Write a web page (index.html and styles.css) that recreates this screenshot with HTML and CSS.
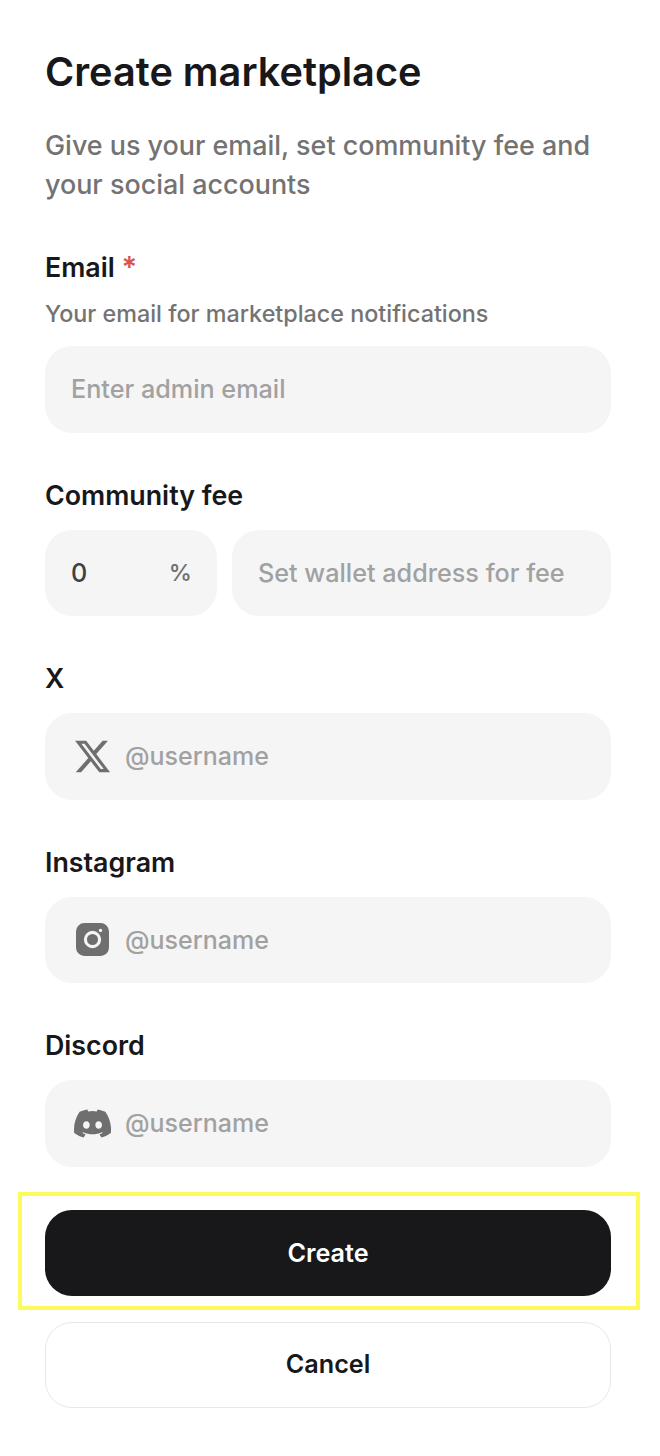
FILE: index.html
```html
<!DOCTYPE html>
<html lang="en">
<head>
    <meta charset="UTF-8">
    <meta name="viewport" content="width=device-width, initial-scale=1.0">
    <title>Create marketplace</title>
    <link rel="stylesheet" href="styles.css">
</head>
<body>
    <form class="page">
        <h1 class="title">Create marketplace</h1>
        <p class="subtitle">Give us your email, set community fee and your social accounts</p>

        <div class="field field-email">
            <label class="label">Email <span class="required">*</span></label>
            <p class="hint">Your email for marketplace notifications</p>
            <div class="box"><span class="placeholder">Enter admin email</span></div>
        </div>

        <div class="field field-fee">
            <label class="label">Community fee</label>
            <div class="fee-row">
                <div class="box box-fee"><span class="value">0</span><span class="unit">%</span></div>
                <div class="box box-wallet"><span class="placeholder">Set wallet address for fee</span></div>
            </div>
        </div>

        <div class="field">
            <label class="label">X</label>
            <div class="box box-social">
                <svg class="icon" viewBox="0.6 0.6 22.8 22.8"><path fill="#6f6f6f" d="M18.244 2.25h3.308l-7.227 8.26 8.502 11.24H16.17l-5.214-6.817L4.99 21.75H1.68l7.73-8.835L1.254 2.25H8.08l4.713 6.231zm-1.161 17.52h1.833L7.084 4.126H5.117z"/></svg>
                <span class="placeholder">@username</span>
            </div>
        </div>

        <div class="field">
            <label class="label">Instagram</label>
            <div class="box box-social">
                <svg class="icon" viewBox="0 0 24 24"><path fill="#6f6f6f" fill-rule="evenodd" d="M6.8 1.3h10.4a5.5 5.5 0 0 1 5.5 5.5v10.4a5.5 5.5 0 0 1-5.5 5.5H6.8a5.5 5.5 0 0 1-5.5-5.5V6.8a5.5 5.5 0 0 1 5.5-5.5zM12 6.4a5.6 5.6 0 1 0 0 11.2 5.6 5.6 0 0 0 0-11.2zm0 2a3.6 3.6 0 1 1 0 7.2 3.6 3.6 0 0 1 0-7.2zm5.2-3.4a1.1 1.1 0 1 0 0 2.2 1.1 1.1 0 0 0 0-2.2z"/></svg>
                <span class="placeholder">@username</span>
            </div>
        </div>

        <div class="field">
            <label class="label">Discord</label>
            <div class="box box-social">
                <svg class="icon" viewBox="0 0 24 24"><path fill="#6f6f6f" d="M20.32 4.37a19.8 19.8 0 0 0-4.89-1.52.07.07 0 0 0-.08.04c-.21.38-.44.87-.61 1.25a18.3 18.3 0 0 0-5.49 0 12.6 12.6 0 0 0-.62-1.25.08.08 0 0 0-.08-.04 19.7 19.7 0 0 0-4.89 1.52.07.07 0 0 0-.03.03C.53 9.05-.32 13.58.1 18.06c0 .02.01.04.03.06a19.9 19.9 0 0 0 6 3.03.08.08 0 0 0 .08-.03c.46-.63.87-1.3 1.23-2a.08.08 0 0 0-.04-.11 13.1 13.1 0 0 1-1.87-.89.08.08 0 0 1-.01-.13l.37-.29a.07.07 0 0 1 .08-.01c3.93 1.79 8.18 1.79 12.07 0a.07.07 0 0 1 .08.01l.37.29a.08.08 0 0 1 0 .13c-.6.35-1.22.64-1.87.89a.08.08 0 0 0-.04.11c.36.7.78 1.37 1.23 2a.08.08 0 0 0 .08.03 19.8 19.8 0 0 0 6-3.03.08.08 0 0 0 .03-.06c.5-5.18-.84-9.67-3.55-13.66a.06.06 0 0 0-.03-.03zM8.02 15.33c-1.18 0-2.16-1.08-2.16-2.42 0-1.33.96-2.42 2.16-2.42 1.21 0 2.18 1.1 2.16 2.42 0 1.34-.96 2.42-2.16 2.42zm7.97 0c-1.18 0-2.15-1.08-2.15-2.42 0-1.33.95-2.42 2.15-2.42 1.22 0 2.18 1.1 2.16 2.42 0 1.34-.94 2.42-2.16 2.42z"/></svg>
                <span class="placeholder">@username</span>
            </div>
        </div>

        <div class="highlight">
            <button type="button" class="btn btn-primary">Create</button>
        </div>
        <button type="button" class="btn btn-secondary">Cancel</button>
    </form>
</body>
</html>
```

FILE: styles.css
```css
* {
    box-sizing: border-box;
}
body {
    margin: 0;
    background-color: #ffffff;
    color: #18181b;
    font-family: "Inter", "Liberation Sans", sans-serif;
}
.page {
    width: 660px;
    padding: 46px 49px 0 45px;
}
.title {
    margin: 0;
    font-size: 39.7px;
    line-height: 52px;
    font-weight: 600;
}
.subtitle {
    margin: 28px 0 0;
    font-size: 26.9px;
    line-height: 39px;
    font-weight: 500;
    color: #737373;
}
.field {
    margin-top: 42.83px;
}
.field-email {
    margin-top: 44px;
}
.field-fee {
    margin-top: 43.67px;
}
.label {
    display: block;
    font-size: 26.8px;
    line-height: 38px;
    font-weight: 600;
}
.required {
    font-size: 29px;
    line-height: 0;
    color: #d9534f;
}
.hint {
    margin: 11px 0 15px;
    font-size: 23.33px;
    line-height: 34px;
    font-weight: 500;
    color: #737373;
}
.box {
    display: flex;
    align-items: center;
    height: 86.67px;
    padding: 0 26px;
    background-color: #f5f5f5;
    border-radius: 27px;
    font-size: 25.2px;
    font-weight: 500;
}
.placeholder {
    color: #a1a1a1;
}
.value {
    color: #404040;
}
.unit {
    font-size: 23.33px;
    color: #6f6f6f;
}
.fee-row {
    display: flex;
    gap: 15px;
    margin-top: 15.33px;
}
.box-fee {
    width: 172px;
    flex: none;
    justify-content: space-between;
    padding-right: 25px;
}
.box-wallet {
    flex: 1;
}
.box-social {
    margin-top: 16px;
    padding-left: 29px;
    gap: 14px;
    font-size: 25px;
}
.icon {
    width: 37px;
    height: 37px;
    flex: none;
}
.highlight {
    margin: 25px -29px 0 -27px;
    padding: 14px 25px 10px 23px;
    border: 4px solid #fdfa5c;
}
.btn {
    display: block;
    width: 100%;
    height: 86px;
    border-radius: 27px;
    font-family: inherit;
    font-size: 25.2px;
    font-weight: 600;
    text-align: center;
}
.btn-primary {
    background-color: #18181b;
    color: #ffffff;
    border: none;
}
.btn-secondary {
    margin-top: 12px;
    padding-bottom: 3px;
    background-color: #ffffff;
    color: #18181b;
    border: 1px solid #e8e8e8;
}
```
